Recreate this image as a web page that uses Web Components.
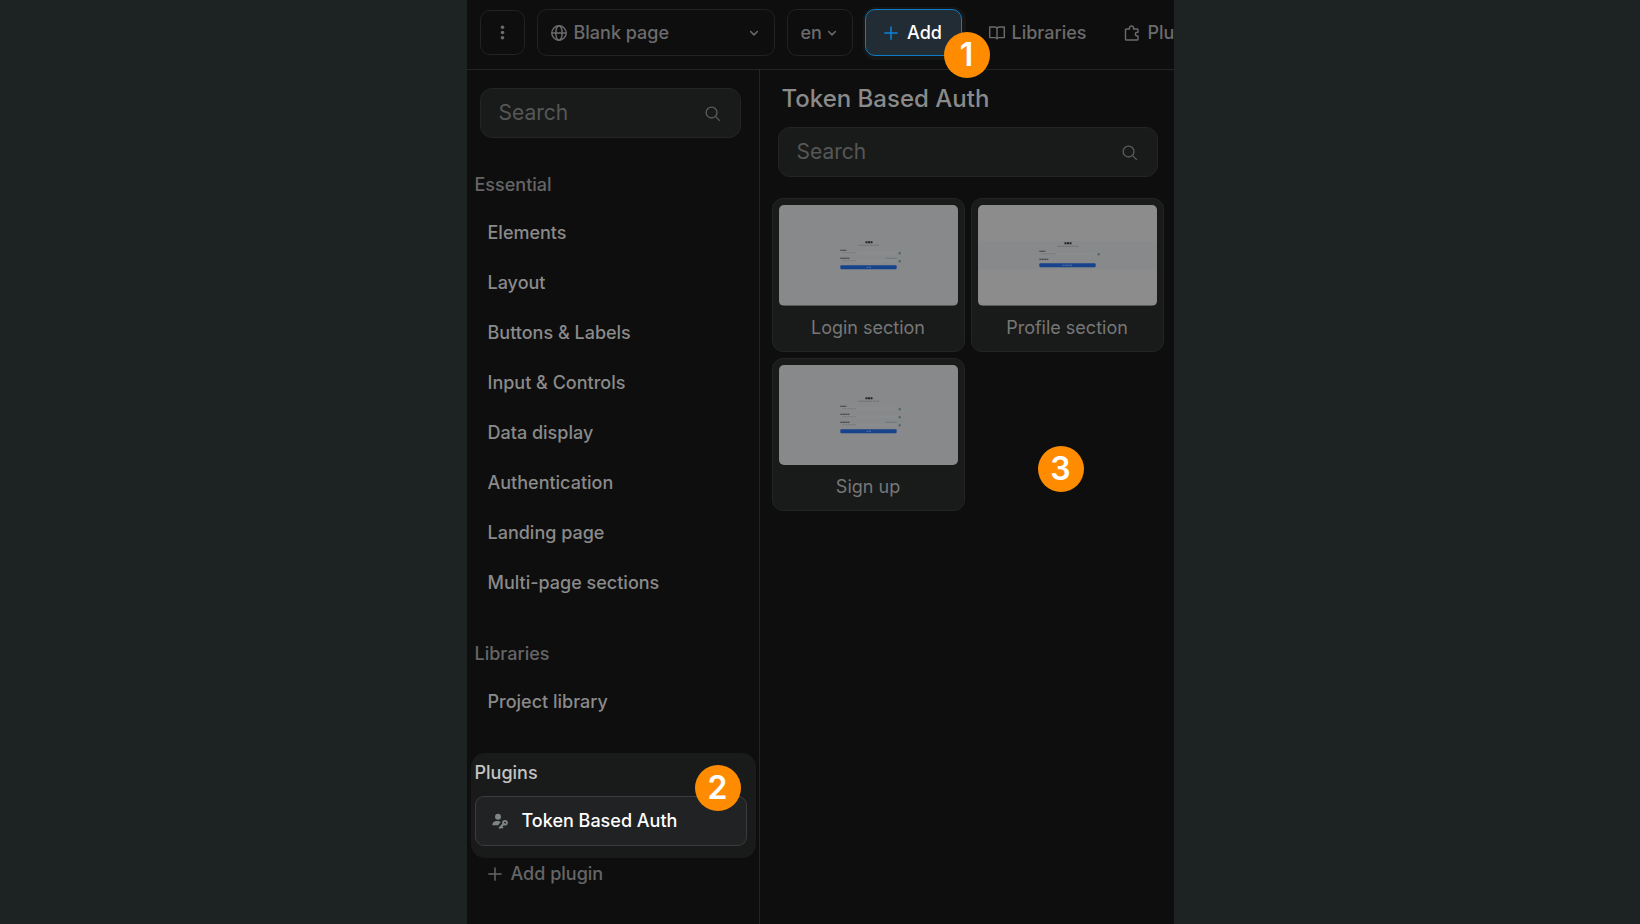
<!DOCTYPE html>
<html lang="en">
<head>
<meta charset="utf-8">
<meta name="viewport" content="width=device-width, initial-scale=1">
<title>Token Based Auth</title>
<style>
  body {
    margin: 0;
    background: #1d2323;
    color: #8a8a8a;
    font: 500 18px/24px Inter, "Liberation Sans", sans-serif;
  }
</style>
</head>
<body>
<editor-shell>
  <editor-toolbar slot="toolbar"></editor-toolbar>
  <side-nav slot="nav">
    <search-box label="Search elements"></search-box>
    <nav-section heading="Essential">
      <nav-item>Elements</nav-item>
      <nav-item>Layout</nav-item>
      <nav-item>Buttons &amp; Labels</nav-item>
      <nav-item>Input &amp; Controls</nav-item>
      <nav-item>Data display</nav-item>
      <nav-item>Authentication</nav-item>
      <nav-item>Landing page</nav-item>
      <nav-item>Multi-page sections</nav-item>
    </nav-section>
    <nav-section heading="Libraries">
      <nav-item>Project library</nav-item>
    </nav-section>
    <nav-section heading="Plugins" active>
      <nav-item active><ui-icon slot="icon" name="user-key" size="16"></ui-icon>Token Based Auth</nav-item>
      <step-badge>2</step-badge>
    </nav-section>
    <add-plugin></add-plugin>
  </side-nav>
  <block-browser heading="Token Based Auth">
    <block-card kind="login">Login section</block-card>
    <block-card kind="profile">Profile section</block-card>
    <block-card kind="signup">Sign up</block-card>
    <step-badge slot="badge">3</step-badge>
  </block-browser>
</editor-shell>

<script>
const ICONS = {
  dots: '<g fill="currentColor" stroke="none"><circle cx="8" cy="2.4" r="1.9"/><circle cx="8" cy="8" r="1.9"/><circle cx="8" cy="13.6" r="1.9"/></g>',
  globe: '<circle cx="8" cy="8" r="7.2"/><ellipse cx="8" cy="8" rx="3.2" ry="7.2"/><path d="M.8 8h14.4"/>',
  chevron: '<path d="M3.5 6 8 10.5 12.5 6" stroke-width="2"/>',
  plus: '<path d="M8 1v14M1 8h14" stroke-width="1.7"/>',
  search: '<circle cx="7" cy="7" r="5.8"/><path d="m11.3 11.3 4 4"/>',
  book: '<path d="M8 3.4C7.6 2.5 6.9 2 5.9 2H.7v10.6h5.4c1 0 1.6.5 1.9 1.3.3-.8.9-1.3 1.9-1.3h5.4V2h-5.2c-1 0-1.7.5-2.1 1.4Zm0 0v10.5"/>',
  puzzle: '<path d="M2.300 4h3.200V3a2 2 0 0 1 4 0v1h3.700a.8.8 0 0 1 .8.8v2.400h-.7a1.900 1.900 0 0 0 0 3.800h.7v3.200a.8.8 0 0 1-.8.8H2.300a.8.8 0 0 1-.8-.8V4.800a.8.8 0 0 1 .8-.8Z"/>',
  'user-key': '<g fill="currentColor" stroke="none"><circle cx="6" cy="3.700" r="3"/><path d="M.2 12.300C.4 9.500 2.200 8 5 8c1.700 0 2.800.3 3.600 1L6.200 12.300Z"/></g><path d="m7.800 14.700 4-4M9 13.500l1.200 1" stroke-width="2"/><circle cx="13" cy="9.700" r="1.900" stroke-width="1.800"/>'
};

class UiIcon extends HTMLElement {
  constructor() {
    super();
    this.attachShadow({mode: 'open'});
  }

  connectedCallback() {
    const size = this.getAttribute('size') || 16;
    this.shadowRoot.innerHTML = `
      <style>
        :host { display: inline-flex; flex: none; }
        svg { fill: none; stroke: currentColor; stroke-width: 1.4; stroke-linejoin: round; stroke-linecap: round; }
      </style>
      <svg width="${size}" height="${size}" viewBox="0 0 16 16" aria-hidden="true">${ICONS[this.getAttribute('name')]}</svg>
    `;
  }
}

class StepBadge extends HTMLElement {
  constructor() {
    super();
    this.attachShadow({mode: 'open'});
    this.shadowRoot.innerHTML = `
      <style>
        :host {
          display: flex;
          align-items: center;
          justify-content: center;
          width: 46px;
          height: 46px;
          border-radius: 50%;
          background: #ff8c00;
          color: #fff;
          font-size: 32px;
          font-weight: 600;
          line-height: 46px;
        }
      </style>
      <slot></slot>
    `;
  }
}

class SearchBox extends HTMLElement {
  constructor() {
    super();
    this.attachShadow({mode: 'open'});
  }

  connectedCallback() {
    this.shadowRoot.innerHTML = `
      <style>
        :host { display: block; }
        div {
          display: flex;
          align-items: center;
          box-sizing: border-box;
          height: 50px;
          padding: 0 20px 0 18px;
          border: 1px solid #222524;
          border-radius: 12px;
          background: #191b1a;
          color: #5c5c5c;
        }
        input {
          flex: 1;
          min-width: 0;
          padding: 0;
          border: 0;
          outline: 0;
          background: none;
          color: #8a8a8a;
          font: inherit;
          font-size: 21px;
          font-weight: 400;
        }
        input::placeholder { color: #555756; opacity: 1; }
      </style>
      <div>
        <input type="search" placeholder="Search" aria-label="${this.getAttribute('label')}">
        <ui-icon name="search" size="15"></ui-icon>
      </div>
    `;
  }
}

class EditorToolbar extends HTMLElement {
  constructor() {
    super();
    this.attachShadow({mode: 'open'});
    this.shadowRoot.innerHTML = `
      <style>
        :host {
          display: flex;
          align-items: center;
          gap: 12px;
          height: 69px;
          padding: 0 0 4px 13px;
          box-sizing: border-box;
          white-space: nowrap;
          color: #6b6b6b;
        }
        button, select {
          box-sizing: border-box;
          margin: 0;
          color: inherit;
          font: inherit;
          background: none;
          border: 1px solid #222;
          border-radius: 10px;
        }
        .menu { display: flex; align-items: center; justify-content: center; flex: none; width: 45px; height: 45px; padding: 0; }
        .picker { display: grid; align-items: center; flex: none; }
        .picker > * { grid-area: 1 / 1; }
        .picker ui-icon { pointer-events: none; }
        .picker .lead { margin-left: 14px; }
        .picker .arrow { justify-self: end; margin-right: 15px; }
        select { appearance: none; width: 100%; height: 47px; padding: 0 28px 0 13px; outline: 0; }
        .page { width: 238px; }
        .page select { padding-left: 36px; }
        .lang { width: 66px; }
        .wrap { position: relative; flex: none; margin-right: 2px; }
        .add {
          display: flex;
          align-items: center;
          justify-content: center;
          gap: 9px;
          width: 97px;
          height: 47px;
          padding: 0;
          color: #fff;
          border-color: #0b7cc9;
          background: #222c34;
          box-shadow: 1px 1px 0 3px #151717;
        }
        .add ui-icon { color: #0b84d8; }
        .wrap step-badge { position: absolute; right: -28px; top: 23px; }
        .link { display: flex; align-items: center; gap: 7px; flex: none; border-color: transparent; padding: 0 12px; }
      </style>
      <button class="menu" aria-label="Menu"><ui-icon name="dots" size="15"></ui-icon></button>
      <div class="picker page">
        <select aria-label="Page"><option>Blank page</option></select>
        <ui-icon class="lead" name="globe" size="16"></ui-icon>
        <ui-icon class="arrow" name="chevron" size="12"></ui-icon>
      </div>
      <div class="picker lang">
        <select aria-label="Language"><option>en</option></select>
        <ui-icon class="arrow" name="chevron" size="12"></ui-icon>
      </div>
      <div class="wrap">
        <button class="add"><ui-icon name="plus" size="14"></ui-icon>Add</button>
        <step-badge>1</step-badge>
      </div>
      <button class="link"><ui-icon name="book" size="16"></ui-icon>Libraries</button>
      <button class="link" aria-label="Plugins"><ui-icon name="puzzle" size="16"></ui-icon>Plu</button>
    `;
  }
}

class SideNav extends HTMLElement {
  constructor() {
    super();
    this.attachShadow({mode: 'open'});
    this.shadowRoot.innerHTML = `
      <style>
        :host { display: block; padding: 18px 3px 0 4px; }
        ::slotted(search-box) { margin: 0 15px 27px 9px; }
      </style>
      <slot></slot>
    `;
  }
}

class NavSection extends HTMLElement {
  constructor() {
    super();
    this.attachShadow({mode: 'open'});
  }

  connectedCallback() {
    this.shadowRoot.innerHTML = `
      <style>
        :host { display: block; position: relative; margin-top: 26px; padding: 8px 9px 0 4px; }
        :host([active]) { padding-bottom: 12px; border-radius: 14px; background: #191b1a; }
        h2 { margin: 0 0 11px; font: inherit; color: #656565; }
        :host([active]) h2 { color: #c4c4c4; }
        ::slotted(step-badge) { position: absolute; right: 15px; top: 12px; }
      </style>
      <h2>${this.getAttribute('heading')}</h2>
      <slot></slot>
    `;
  }
}

class NavItem extends HTMLElement {
  constructor() {
    super();
    this.attachShadow({mode: 'open'});
    this.shadowRoot.innerHTML = `
      <style>
        :host { display: block; }
        a {
          display: flex;
          align-items: center;
          gap: 14px;
          box-sizing: border-box;
          height: 50px;
          padding: 0 13px;
          color: inherit;
          text-decoration: none;
        }
        :host([active]) a {
          padding: 0 16px;
          border: 1px solid #3a3c3e;
          border-radius: 9px;
          background: #212224;
          color: #fff;
        }
        ::slotted(ui-icon) { color: #7d8585; }
      </style>
      <a href="#"><slot name="icon"></slot><span><slot></slot></span></a>
    `;
  }
}

class AddPlugin extends HTMLElement {
  constructor() {
    super();
    this.attachShadow({mode: 'open'});
    this.shadowRoot.innerHTML = `
      <style>
        :host { display: block; padding-left: 17px; }
        button {
          display: flex;
          align-items: center;
          gap: 9px;
          height: 32px;
          padding: 0;
          border: 0;
          background: none;
          color: #656565;
          font: inherit;
        }
      </style>
      <button><ui-icon name="plus" size="14"></ui-icon>Add plugin</button>
    `;
  }
}

// Miniature forms shown in the card previews, in preview pixels
const PREVIEWS = {
  login: {top: 34, fields: 2, button: 26},
  profile: {top: 35, fields: 2, button: 23},
  signup: {top: 30, fields: 3, button: 34}
};

class BlockCard extends HTMLElement {
  constructor() {
    super();
    this.attachShadow({mode: 'open'});
  }

  drawPreview(kind) {
    const profile = kind === 'profile';
    const {top, fields, button} = PREVIEWS[kind];
    let out = `<rect width="178" height="100" fill="${profile ? '#8c8c8c' : '#87898b'}"/>`;
    if (profile) {
      out += '<rect y="36" width="178" height="28" fill="#87898b"/>';
    }
    // heading and the line under it, too small to read
    out += `<path d="M86 ${top + 3}h7" stroke="#222" stroke-width="2" stroke-dasharray="2 .5"/>`;
    out += `<path d="M79 ${top + 6}h21" stroke="#6f7275" stroke-dasharray="3 .5"/>`;
    for (let i = 0; i < fields; i++) {
      const y = top + 11 + i * 8;
      const last = profile && i === 1;
      out += `<path d="M61 ${y}h${i || last ? 9 : 6}" stroke="#33373a" stroke-dasharray="2 .4"/>`;
      if (!last) {
        out += `<rect x="61" y="${y + 1}" width="56" height="3" fill="#8b8c8d"/>`;
        out += `<path d="M63 ${y + 2.5}h14" stroke="#74777a" stroke-dasharray="2 .5"/>`;
        out += `<rect x="119" y="${y + 2}" width="2" height="2" fill="#46625d"/>`;
      }
      if (i === fields - 1 && !profile) {
        out += `<path d="M106 ${y}h11" stroke="#67727e" stroke-dasharray="2 .4"/>`;
      }
    }
    out += `<rect x="61" y="${top + button}" width="56" height="4" rx="1" fill="#17438c"/>`;
    out += `<path d="M${profile ? 84 : 87} ${top + button + 2}h${profile ? 10 : 5}" stroke="#5672a4" stroke-dasharray="2 .5"/>`;
    return out;
  }

  connectedCallback() {
    const kind = this.getAttribute('kind');
    this.shadowRoot.innerHTML = `
      <style>
        :host { display: block; min-width: 0; }
        button {
          display: block;
          box-sizing: border-box;
          width: 100%;
          padding: 6px 6px 11px;
          border: 1px solid #222524;
          border-radius: 11px;
          background: #191b1a;
          color: #777;
          font: inherit;
          font-weight: 400;
        }
        svg { display: block; width: 100%; border-radius: 5px; }
        span { display: block; margin-top: 10px; }
      </style>
      <button>
        <svg viewBox="0 0 178 100" aria-hidden="true">${this.drawPreview(kind)}</svg>
        <span><slot></slot></span>
      </button>
    `;
  }
}

class BlockBrowser extends HTMLElement {
  constructor() {
    super();
    this.attachShadow({mode: 'open'});
  }

  connectedCallback() {
    this.shadowRoot.innerHTML = `
      <style>
        :host { display: block; position: relative; padding: 13px 10px 0 12px; }
        h1 { margin: 0 0 12px 10px; font-size: 24px; font-weight: 500; line-height: 32px; }
        search-box { margin: 0 6px 21px; }
        .grid { display: grid; grid-template-columns: 1fr 1fr; gap: 6px; }
        /* step marker sits over the empty grid cell */
        ::slotted(step-badge) { position: absolute; right: 90px; top: 376px; }
      </style>
      <h1>${this.getAttribute('heading')}</h1>
      <search-box label="Search blocks"></search-box>
      <div class="grid"><slot></slot></div>
      <slot name="badge"></slot>
    `;
  }
}

class EditorShell extends HTMLElement {
  constructor() {
    super();
    this.attachShadow({mode: 'open'});
    this.shadowRoot.innerHTML = `
      <style>
        :host {
          display: flex;
          flex-direction: column;
          box-sizing: border-box;
          max-width: 707px;
          min-height: 100vh;
          margin: 0 auto;
          overflow: hidden;
          background: #0e0e0e;
        }
        header { border-bottom: 1px solid #242424; }
        .body { display: flex; flex: 1; }
        nav { flex: 0 0 292px; min-width: 0; border-right: 1px solid #242424; }
        main { flex: 1; min-width: 0; }
      </style>
      <header><slot name="toolbar"></slot></header>
      <div class="body">
        <nav><slot name="nav"></slot></nav>
        <main><slot></slot></main>
      </div>
    `;
  }
}

customElements.define('ui-icon', UiIcon);
customElements.define('step-badge', StepBadge);
customElements.define('search-box', SearchBox);
customElements.define('editor-toolbar', EditorToolbar);
customElements.define('side-nav', SideNav);
customElements.define('nav-section', NavSection);
customElements.define('nav-item', NavItem);
customElements.define('add-plugin', AddPlugin);
customElements.define('block-card', BlockCard);
customElements.define('block-browser', BlockBrowser);
customElements.define('editor-shell', EditorShell);
</script>
</body>
</html>
